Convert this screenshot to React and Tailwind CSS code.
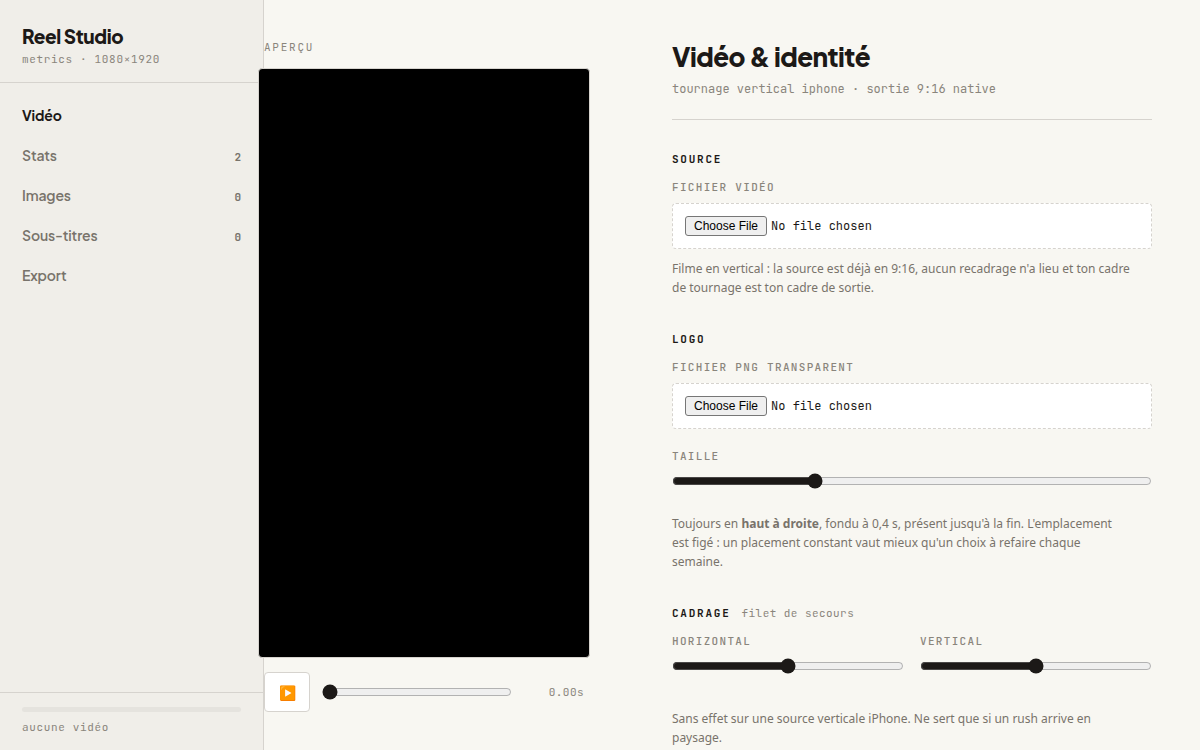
import React, { useState } from 'react';

const MONO = 'font-["JetBrains_Mono","Liberation_Mono",monospace]';
const DISPLAY = 'font-["Plus_Jakarta_Sans","Inter",sans-serif]';

const NAV_ITEMS = [
  { id: 'video', label: 'Vidéo' },
  { id: 'stats', label: 'Stats', count: 2 },
  { id: 'images', label: 'Images', count: 0 },
  { id: 'subtitles', label: 'Sous-titres', count: 0 },
  { id: 'export', label: 'Export' }
];

const Sidebar = ({ active, onSelect }) => {
  return (
    <aside className="w-66 shrink-0 flex flex-col bg-[#f0eee9] border-r border-[#d6d3ce]">
      <div className="px-[22px] pt-6 pb-[14px] border-b border-[#d6d3ce]">
        <div className={`${DISPLAY} text-[19px] leading-6 font-extrabold tracking-[-0.02em] text-[#1c1917]`}>
          Reel Studio
        </div>
        <p className={`${MONO} mt-[2px] text-[11px] leading-[18px] tracking-[0.06em] text-[#8a857c]`}>
          metrics · 1080×1920
        </p>
      </div>

      <nav className="flex-1 pt-3">
        {NAV_ITEMS.map((item) => (
          <button
            key={item.id}
            type="button"
            onClick={() => onSelect(item.id)}
            className={`w-full h-10 px-[22px] flex items-baseline justify-between leading-10 ${
              item.id === active ? 'font-bold text-[#1c1917]' : 'font-semibold text-[#78736b]'
            }`}
          >
            <span className={`${DISPLAY} text-[14px] tracking-[-0.01em]`}>{item.label}</span>
            {item.count !== undefined && (
              <span className={`${MONO} text-[11px]`}>{item.count}</span>
            )}
          </button>
        ))}
      </nav>

      <div className="px-[22px] pt-[14px] pb-[15px] border-t border-[#d6d3ce]">
        <div className="h-[5px] rounded-full bg-[#e5e3de]" />
        <p className={`${MONO} mt-[7px] text-[11px] leading-4 tracking-[0.06em] text-[#8a857c]`}>
          aucune vidéo
        </p>
      </div>
    </aside>
  );
};

const Preview = () => {
  const [time, setTime] = useState(0);

  return (
    <section className="w-90 shrink-0 pt-[39px] pr-10">
      <h2 className={`${MONO} text-[11px] leading-4 tracking-[0.16em] uppercase text-[#8a857c]`}>
        Aperçu
      </h2>
      <div className="mt-[13px] flex justify-center">
        <canvas className="h-[calc(100vh-160px)] aspect-[9/16] max-w-none shrink-0 rounded-sm border border-[#d6d3ce] bg-black" />
      </div>
      <div className="mt-[14px] flex items-center gap-3">
        <button
          type="button"
          aria-label="Lecture"
          className="w-[46px] h-10 pt-[2px] shrink-0 rounded-sm border border-[#d6d3ce] bg-white text-sm"
        >
          ▶️
        </button>
        <input
          type="range"
          aria-label="Position"
          min="0"
          max="100"
          value={time}
          onChange={(e) => setTime(Number(e.target.value))}
          className="flex-1 min-w-0 accent-[#1c1917]"
        />
        <span className={`${MONO} w-15 text-right text-[11px] tracking-[0.04em] text-[#8a857c]`}>
          {time.toFixed(2)}s
        </span>
      </div>
    </section>
  );
};

const SectionTitle = ({ children, note }) => (
  <h2 className="mb-3 flex items-baseline gap-[11px] leading-4">
    <span className={`${MONO} text-[11px] font-semibold tracking-[0.16em] uppercase text-[#1c1917]`}>
      {children}
    </span>
    {note && (
      <span className={`${MONO} text-[11px] tracking-[0.04em] text-[#8a857c]`}>{note}</span>
    )}
  </h2>
);

const FieldLabel = ({ htmlFor, children }) => (
  <label
    htmlFor={htmlFor}
    className={`${MONO} block mb-2 text-[11px] leading-4 font-medium tracking-[0.12em] uppercase text-[#8a857c]`}
  >
    {children}
  </label>
);

const FileField = ({ id, label, accept }) => (
  <div>
    <FieldLabel htmlFor={id}>{label}</FieldLabel>
    <input
      id={id}
      type="file"
      accept={accept}
      className={`${MONO} block w-full h-[46px] p-3 rounded-sm border border-dashed border-[#d6d3ce] bg-white text-xs leading-5 text-[#1c1917] file:h-5 file:px-2 file:rounded-[3px] file:border file:border-solid file:border-[#767676] file:bg-[#efefef] file:font-["Liberation_Sans",sans-serif] file:text-[12px] file:leading-4 file:text-black`}
    />
  </div>
);

const RangeField = ({ id, label, initial }) => {
  const [value, setValue] = useState(initial);

  return (
    <div>
      <FieldLabel htmlFor={id}>{label}</FieldLabel>
      <input
        id={id}
        type="range"
        min="0"
        max="100"
        value={value}
        onChange={(e) => setValue(Number(e.target.value))}
        className="block w-full h-[18px] accent-[#1c1917]"
      />
    </div>
  );
};

const Hint = ({ children }) => (
  <p className="text-xs leading-[19px] text-[#78736b]">{children}</p>
);

const App = () => {
  const [active, setActive] = useState('video');

  return (
    <div className='h-screen flex overflow-hidden bg-[#f8f7f2] text-[#1c1917] font-["Noto_Sans",sans-serif]'>
      <Sidebar active={active} onSelect={setActive} />
      <Preview />

      <main className="flex-1 min-w-0 px-12 pt-[39px] pb-10 overflow-y-auto [scrollbar-width:none]">
        <header className="pb-[22px] border-b border-[#d6d3ce]">
          <h1 className={`${DISPLAY} text-[26px] leading-9 font-extrabold tracking-[-0.02em]`}>
            Vidéo & identité
          </h1>
          <p className={`${MONO} mt-[6px] text-xs leading-4 text-[#8a857c]`}>
            tournage vertical iphone · sortie 9:16 native
          </p>
        </header>

        <section className="mt-[31px]">
          <SectionTitle>Source</SectionTitle>
          <FileField id="video-file" label="Fichier vidéo" accept="video/*" />
          <div className="mt-[10px]">
            <Hint>
              Filme en vertical : la source est déjà en 9:16, aucun recadrage n'a lieu et ton cadre
              <br /> de tournage est ton cadre de sortie.
            </Hint>
          </div>
        </section>

        <section className="mt-[34px]">
          <SectionTitle>Logo</SectionTitle>
          <FileField id="logo-file" label="Fichier PNG transparent" accept="image/png" />
          <div className="mt-[19px] mb-6">
            <RangeField id="logo-size" label="Taille" initial={29} />
          </div>
          <Hint>
            Toujours en <strong className="font-bold">haut à droite</strong>, fondu à 0,4 s, présent
            jusqu'à la fin. L'emplacement
            <br /> est figé : un placement constant vaut mieux qu'un choix à refaire chaque
            <br /> semaine.
          </Hint>
        </section>

        <section className="mt-[34px]">
          <SectionTitle note="filet de secours">Cadrage</SectionTitle>
          <div className="mb-[34px] grid grid-cols-2 gap-4">
            <RangeField id="crop-x" label="Horizontal" initial={50} />
            <RangeField id="crop-y" label="Vertical" initial={50} />
          </div>
          <Hint>
            Sans effet sur une source verticale iPhone. Ne sert que si un rush arrive en
            <br /> paysage.
          </Hint>
        </section>
      </main>
    </div>
  );
};

export default App;
